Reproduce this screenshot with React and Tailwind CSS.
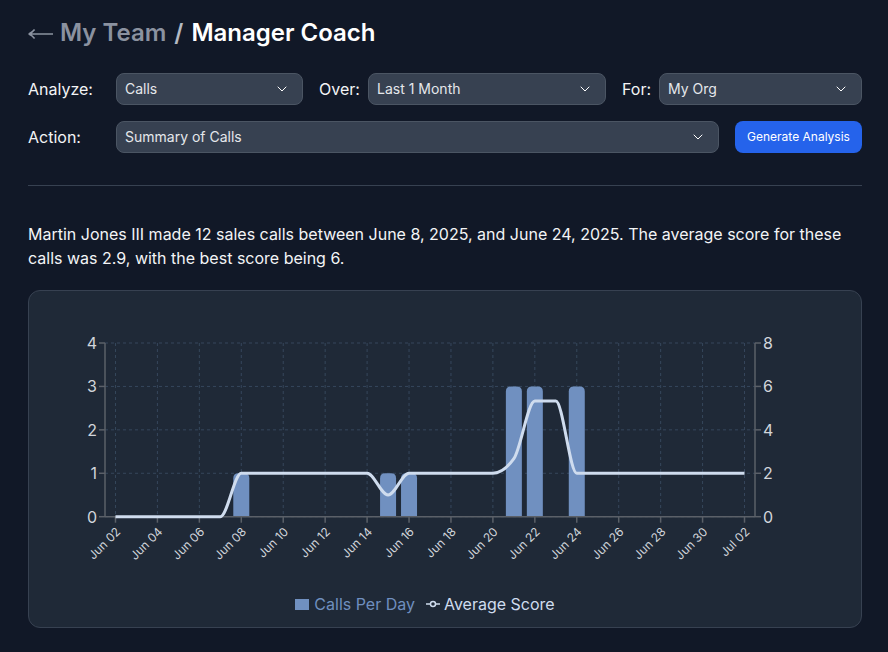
import React from "react";
import { ChevronDown } from "lucide-react";

const X0 = 105, BAND = 650 / 31, Y0 = 516.7, H = 173.7;
const xAt = (d) => X0 + BAND * (d + 0.5);
const yL = (v) => Y0 - (v / 4) * H;
const yR = (v) => Y0 - (v / 8) * H;

const bars = [[6, 1], [13, 1], [14, 1], [19, 3], [20, 3], [22, 3]];
const scores = Array.from({ length: 31 }, (_, i) => {
  if (i < 6) return 0;
  if (i === 13) return 1;
  if (i === 19) return 2.67;
  if (i === 20 || i === 21) return 5.33;
  return 2;
});

function monotonePath(pts) {
  const n = pts.length;
  const slope = [];
  for (let i = 0; i < n - 1; i++) slope.push((pts[i + 1][1] - pts[i][1]) / (pts[i + 1][0] - pts[i][0]));
  const sign = (v) => (v < 0 ? -1 : 1);
  const t = pts.map((_, i) => {
    if (i === 0) return slope[0];
    if (i === n - 1) return slope[n - 2];
    const a = slope[i - 1], b = slope[i];
    const h = pts[i + 1][0] - pts[i][0];
    const p = (a * h + b * h) / (2 * h);
    return (sign(a) + sign(b)) * Math.min(Math.abs(a), Math.abs(b), 0.5 * Math.abs(p)) || 0;
  });
  let d = `M${pts[0][0]},${pts[0][1]}`;
  for (let i = 0; i < n - 1; i++) {
    const dx = (pts[i + 1][0] - pts[i][0]) / 3;
    d += `C${pts[i][0] + dx},${pts[i][1] + t[i] * dx} ${pts[i + 1][0] - dx},${pts[i + 1][1] - t[i + 1] * dx} ${pts[i + 1][0]},${pts[i + 1][1]}`;
  }
  return d;
}

const dateLabels = ["Jun 02", "Jun 04", "Jun 06", "Jun 08", "Jun 10", "Jun 12", "Jun 14", "Jun 16", "Jun 18", "Jun 20", "Jun 22", "Jun 24", "Jun 26", "Jun 28", "Jun 30", "Jul 02"];

function barPath(x, y, w, r) {
  return `M${x},${Y0}V${y + r}Q${x},${y} ${x + r},${y}H${x + w - r}Q${x + w},${y} ${x + w},${y + r}V${Y0}Z`;
}

function Chart() {
  const ink = "#d1d5db";
  const axis = "#5b6068";
  const grid = "#36475c";
  const right = X0 + 650;
  return (
    <svg width="832" height="271" viewBox="29 321 832 271" className="block" style={{ fontFamily: "Inter, sans-serif" }}>
      {[0, 1, 2, 3, 4].map((v) => (
        <line key={v} x1={X0} x2={right} y1={yL(v)} y2={yL(v)} stroke={grid} strokeDasharray="3 3" />
      ))}
      {dateLabels.map((_, i) => (
        <line key={i} x1={xAt(i * 2)} x2={xAt(i * 2)} y1={343} y2={Y0} stroke={grid} strokeDasharray="3 3" />
      ))}
      {bars.map(([d, v]) => (
        <path key={d} d={barPath(xAt(d) - 8, yL(v), 16, 5)} fill="#7090c0" />
      ))}
      <line x1={X0} x2={X0} y1={343} y2={Y0} stroke={axis} strokeWidth="1.5" />
      <line x1={right} x2={right} y1={343} y2={Y0} stroke={axis} strokeWidth="1.5" />
      <line x1={X0} x2={right} y1={Y0} y2={Y0} stroke={axis} strokeWidth="1.5" />
      {[0, 1, 2, 3, 4].map((v) => (
        <g key={v}>
          <line x1={X0 - 6} x2={X0} y1={yL(v)} y2={yL(v)} stroke={axis} strokeWidth="1.5" />
          <text x={X0 - 8} y={yL(v) + 6} textAnchor="end" fontSize="16" fill={ink}>{v}</text>
        </g>
      ))}
      {[0, 2, 4, 6, 8].map((v) => (
        <g key={v}>
          <line x1={right} x2={right + 6} y1={yR(v)} y2={yR(v)} stroke={axis} strokeWidth="1.5" />
          <text x={right + 8} y={yR(v) + 6} fontSize="16" fill={ink}>{v}</text>
        </g>
      ))}
      {dateLabels.map((l, i) => (
        <g key={l}>
          <line x1={xAt(i * 2)} x2={xAt(i * 2)} y1={Y0} y2={Y0 + 6} stroke={axis} strokeWidth="1.5" />
          <text
            x={xAt(i * 2) + 3}
            y={Y0 + 17}
            textAnchor="end"
            fontSize="12"
            fill={ink}
            transform={`rotate(-45 ${xAt(i * 2) + 3} ${Y0 + 13})`}
          >
            {l}
          </text>
        </g>
      ))}
      <path d={monotonePath(scores.map((v, i) => [xAt(i), yR(v)]))} fill="none" stroke="#cfdcee" strokeWidth="3" />
    </svg>
  );
}

function Select({ label, className }) {
  return (
    <div className={`flex h-8 items-center justify-between rounded-lg border border-[#4b5563] bg-[#374151] pl-2 pr-3 text-sm text-[#e5e7eb] ${className}`}>
      <span>{label}</span>
      <ChevronDown size={16} strokeWidth={1.5} className="text-white" />
    </div>
  );
}

export default function App() {
  return (
    <div className="min-h-[652px] bg-[#111827] pl-7 pr-[26px] pt-[17px] text-white" style={{ fontFamily: "Inter, sans-serif" }}>
      <h1 className="flex h-8 items-center text-2xl font-semibold">
        <svg width="25" height="12" viewBox="0 0 25 12" className="mt-[2px] text-[#8b92a0]" aria-label="Back">
          <path d="M0.5 6H25M0.8 6C3 5 5.2 3.4 6.6 1.6M0.8 6C3 7 5.2 8.6 6.6 10.4" fill="none" stroke="currentColor" strokeWidth="1.6" />
        </svg>
        <span className="ml-[7px] text-[#8b92a0]">My Team</span>
        <span className="ml-2 text-[#b4b9c2]">/</span>
        <span className="ml-2 text-white">Manager Coach</span>
      </h1>
      <div className="mt-[24px] flex items-center">
        <span className="w-[88px] text-base text-[#f3f4f6]">Analyze:</span>
        <Select label="Calls" className="w-[187px]" />
        <span className="ml-4 w-[49px] text-base text-[#f3f4f6]">Over:</span>
        <Select label="Last 1 Month" className="w-[238px]" />
        <span className="ml-4 w-[37px] text-base text-[#f3f4f6]">For:</span>
        <Select label="My Org" className="w-[203px]" />
      </div>
      <div className="mt-4 flex items-center">
        <span className="w-[88px] text-base text-[#f3f4f6]">Action:</span>
        <Select label="Summary of Calls" className="w-[603px]" />
        <button className="ml-4 flex h-8 w-[127px] items-center justify-center rounded-lg bg-[#2563eb] text-xs font-normal text-white">
          Generate Analysis
        </button>
      </div>
      <div className="mt-8 h-px bg-[#374151]" />
      <p className="mt-[36px] text-base leading-6 text-[#f3f4f6]">
        Martin Jones III made 12 sales calls between June 8, 2025, and June 24, 2025. The average score for these calls was 2.9, with the best score being 6.
      </p>
      <div className="mt-5 h-[338px] rounded-xl border border-[#374151] bg-[#1f2937] pt-[30px]">
        <Chart />
        <div className="flex items-center justify-center pr-[40px] text-base leading-6">
          <span className="h-[11px] w-[14px] bg-[#7090c0]" />
          <span className="ml-[5px] text-[#6f8fbf]">Calls Per Day</span>
          <svg width="14" height="8" viewBox="0 0 14 8" className="ml-[11px]">
            <line x1="0" x2="14" y1="4" y2="4" stroke="#cfdcee" strokeWidth="1.5" />
            <circle cx="7" cy="4" r="2.5" fill="#1f2937" stroke="#cfdcee" strokeWidth="1.5" />
          </svg>
          <span className="ml-[4px] text-[#cfdcee]">Average Score</span>
        </div>
      </div>
    </div>
  );
}
